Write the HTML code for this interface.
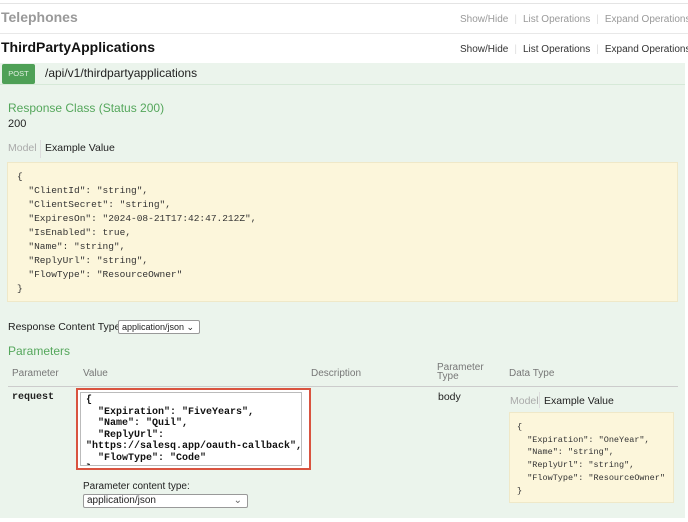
<!DOCTYPE html>
<html><head><meta charset="utf-8"><style>
*{margin:0;padding:0;box-sizing:border-box}
body{width:688px;height:522px;background:#fff;font-family:"Liberation Sans",sans-serif;position:relative;overflow:hidden;color:#222}
.a{position:absolute;white-space:nowrap}
pre.a,pre{white-space:pre}
.mono{font-family:"Liberation Mono","DejaVu Sans Mono",monospace}
.links{font-size:10px;color:#999}
.links span.sep{color:#ddd;margin:0 6px}
</style></head><body>
<div class="a" style="left:0;top:3px;width:688px;height:1px;background:#e4e4e4"></div>
<div class="a" style="left:1px;top:9px;font-size:14px;font-weight:bold;color:#999">Telephones</div>
<div class="a links" style="left:460px;top:14px">Show/Hide<span class="sep">|</span>List Operations<span class="sep">|</span>Expand Operations</div>
<div class="a" style="left:0;top:33px;width:688px;height:1px;background:#e8e8e8"></div>
<div class="a" style="left:1px;top:39px;font-size:14px;font-weight:bold;color:#111">ThirdPartyApplications</div>
<div class="a links" style="left:460px;top:44px;color:#333">Show/Hide<span class="sep">|</span>List Operations<span class="sep">|</span>Expand Operations</div>
<div class="a" style="left:0;top:63px;width:685px;height:455px;background:#ebf4ec"></div>
<div class="a" style="left:0;top:84px;width:685px;height:1px;background:#d6e9d8"></div>
<div class="a" style="left:2px;top:64px;width:33px;height:20px;background:#4ea056;border-radius:2px;color:#dff0e0;font-size:7.5px;line-height:20px;text-align:center">POST</div>
<div class="a" style="left:45px;top:66px;font-size:12px;color:#222">/api/v1/thirdpartyapplications</div>
<div class="a" style="left:8px;top:101px;font-size:12px;color:#55a75c">Response Class (Status 200)</div>
<div class="a" style="left:8px;top:118px;font-size:11px">200</div>
<div class="a" style="left:8px;top:142px;font-size:10.5px;color:#aaa">Model</div>
<div class="a" style="left:40px;top:140px;width:1px;height:18px;background:#ddd"></div>
<div class="a" style="left:45px;top:142px;font-size:10.5px;color:#222">Example Value</div>
<div class="a" style="left:7px;top:162px;width:671px;height:140px;background:#fcf6db;border:1px solid #efe8c8"></div>
<pre class="a mono" style="left:17px;top:170px;font-size:9.5px;line-height:14px;color:#333">{
  "ClientId": "string",
  "ClientSecret": "string",
  "ExpiresOn": "2024-08-21T17:42:47.212Z",
  "IsEnabled": true,
  "Name": "string",
  "ReplyUrl": "string",
  "FlowType": "ResourceOwner"
}</pre>
<div class="a" style="left:8px;top:321px;font-size:10.5px">Response Content Type</div>
<div class="a" style="left:118px;top:320px;width:82px;height:14px;background:#fff;border:1px solid #999;border-radius:2px;font-size:9px;line-height:12px;padding-left:3px">application/json ⌄</div>
<div class="a" style="left:8px;top:344px;font-size:12px;color:#55a75c">Parameters</div>
<div class="a" style="left:12px;top:368px;font-size:10px;color:#777">Parameter</div>
<div class="a" style="left:83px;top:368px;font-size:10px;color:#777">Value</div>
<div class="a" style="left:311px;top:368px;font-size:10px;color:#777">Description</div>
<div class="a" style="left:437px;top:363px;font-size:10px;color:#777;line-height:9px">Parameter<br>Type</div>
<div class="a" style="left:509px;top:368px;font-size:10px;color:#777">Data Type</div>
<div class="a" style="left:8px;top:386px;width:670px;height:1px;background:#ccc"></div>
<div class="a mono" style="left:12px;top:392px;font-size:10px;font-weight:bold">request</div>
<div class="a" style="left:76px;top:388px;width:235px;height:82px;border:2px solid #d9533f;background:#fff"></div>
<div class="a" style="left:80px;top:392px;width:222px;height:74px;border:1px solid #bbb;overflow:hidden">
<pre class="mono" style="font-size:10px;line-height:11.5px;font-weight:bold;color:#111;padding:2px 0 0 5px">{
  "Expiration": "FiveYears",
  "Name": "Quil",
  "ReplyUrl":
"https://salesq.app/oauth-callback",
  "FlowType": "Code"
}</pre></div>
<div class="a" style="left:83px;top:481px;font-size:10px">Parameter content type:</div>
<div class="a" style="left:83px;top:494px;width:165px;height:14px;background:#fff;border:1px solid #999;border-radius:2px;font-size:10px;line-height:12px;padding-left:3px">application/json<span style="position:absolute;right:5px;color:#666">⌄</span></div>
<div class="a" style="left:438px;top:391px;font-size:10.5px">body</div>
<div class="a" style="left:510px;top:395px;font-size:10.5px;color:#aaa">Model</div>
<div class="a" style="left:539px;top:392px;width:1px;height:16px;background:#ddd"></div>
<div class="a" style="left:544px;top:395px;font-size:10.5px;color:#222">Example Value</div>
<div class="a" style="left:509px;top:412px;width:165px;height:91px;background:#fcf6db;border:1px solid #efe8c8"></div>
<pre class="a mono" style="left:517px;top:421px;font-size:8.5px;line-height:12.7px;color:#333">{
  "Expiration": "OneYear",
  "Name": "string",
  "ReplyUrl": "string",
  "FlowType": "ResourceOwner"
}</pre>
</body></html>
